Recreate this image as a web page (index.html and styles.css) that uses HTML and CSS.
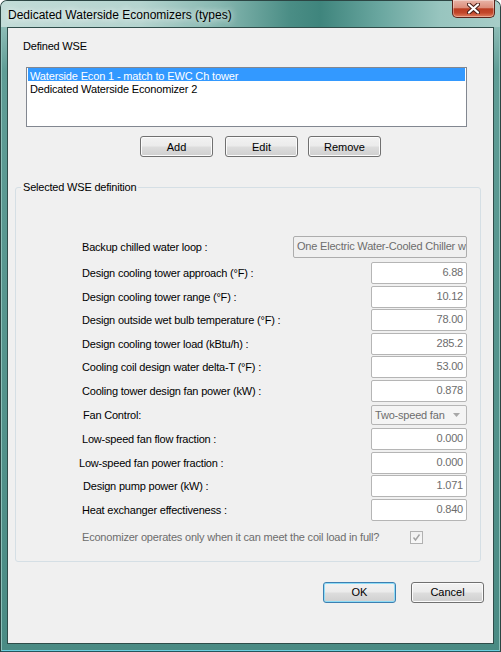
FILE: index.html
```html
<!DOCTYPE html>
<html lang="en">
<head>
    <meta charset="UTF-8">
    <title>Dedicated Waterside Economizers (types)</title>
    <link rel="stylesheet" href="styles.css">
</head>
<body>
    <div class="window">
        <div class="titlebar">
            <span class="title">Dedicated Waterside Economizers (types)</span>
            <button class="close-btn" aria-label="Close">
                <svg width="13" height="11" viewBox="0 0 13 11">
                    <path d="M2 1.5 L11 9.5 M11 1.5 L2 9.5" stroke="#4a1f17" stroke-width="4.2" stroke-linecap="round"/>
                    <path d="M2 1.5 L11 9.5 M11 1.5 L2 9.5" stroke="#ffffff" stroke-width="2.2" stroke-linecap="round"/>
                </svg>
            </button>
        </div>

        <div class="client">
            <div class="section-label">Defined WSE</div>

            <ul class="listbox">
                <li class="selected">Waterside Econ 1 - match to EWC Ch tower</li>
                <li>Dedicated Waterside Economizer 2</li>
            </ul>

            <div class="list-actions">
                <button class="btn">Add</button>
                <button class="btn btn-edit">Edit</button>
                <button class="btn btn-remove">Remove</button>
            </div>

            <fieldset class="group">
                <legend>Selected WSE definition</legend>

                <div class="form-rows">
                    <div class="field field-backup">
                        <span class="label">Backup chilled water loop :</span>
                        <div class="textbox textbox-wide">One Electric Water-Cooled Chiller w</div>
                    </div>
                    <div class="field">
                        <span class="label">Design cooling tower approach (°F) :</span>
                        <div class="textbox">6.88</div>
                    </div>
                    <div class="field">
                        <span class="label">Design cooling tower range (°F) :</span>
                        <div class="textbox">10.12</div>
                    </div>
                    <div class="field">
                        <span class="label">Design outside wet bulb temperature (°F) :</span>
                        <div class="textbox">78.00</div>
                    </div>
                    <div class="field">
                        <span class="label">Design cooling tower load (kBtu/h) :</span>
                        <div class="textbox">285.2</div>
                    </div>
                    <div class="field">
                        <span class="label">Cooling coil design water delta-T (°F) :</span>
                        <div class="textbox">53.00</div>
                    </div>
                    <div class="field">
                        <span class="label">Cooling tower design fan power (kW) :</span>
                        <div class="textbox">0.878</div>
                    </div>
                    <div class="field field-combo">
                        <span class="label label-shift">Fan Control:</span>
                        <div class="combo">
                            <span>Two-speed fan</span>
                            <svg class="combo-arrow" width="7" height="4" viewBox="0 0 7 4">
                                <path d="M0 0 H7 L3.5 4 Z" fill="#a7a7a7"/>
                            </svg>
                        </div>
                    </div>
                    <div class="field">
                        <span class="label">Low-speed fan flow fraction :</span>
                        <div class="textbox">0.000</div>
                    </div>
                    <div class="field">
                        <span class="label label-back">Low-speed fan power fraction :</span>
                        <div class="textbox">0.000</div>
                    </div>
                    <div class="field">
                        <span class="label label-shift">Design pump power (kW) :</span>
                        <div class="textbox">1.071</div>
                    </div>
                    <div class="field">
                        <span class="label">Heat exchanger effectiveness :</span>
                        <div class="textbox">0.840</div>
                    </div>
                    <div class="check-row">
                        <span class="label label-disabled">Economizer operates only when it can meet the coil load in full?</span>
                        <span class="checkbox">
                            <svg width="11" height="11" viewBox="0 0 11 11">
                                <path d="M2.5 5.5 L4.5 8 L8.5 2.5" fill="none" stroke="#a2a2a2" stroke-width="1.4"/>
                            </svg>
                        </span>
                    </div>
                </div>
            </fieldset>

            <div class="dialog-actions">
                <button class="btn btn-default">OK</button>
                <button class="btn">Cancel</button>
            </div>
        </div>
    </div>
</body>
</html>
```

FILE: styles.css
```css
* {
    margin: 0;
    padding: 0;
    box-sizing: border-box;
}

html, body {
    width: 501px;
    height: 652px;
    overflow: hidden;
}

body {
    font-family: 'Liberation Sans', Arial, sans-serif;
    font-size: 11px;
    letter-spacing: -0.2px;
    color: #000;
    background: #ffffff;
}

/* window frame */
.window {
    width: 501px;
    height: 652px;
    display: flex;
    flex-direction: column;
    border: 1px solid #2c4543;
    border-bottom-color: #24565c;
    border-radius: 7px 7px 0 0;
    background: linear-gradient(180deg, #a9cec9 0, #5f9d96 70px, #4a8b84 100%);
    box-shadow: inset 1px 0 #8dc1ba, inset -1px 0 #8dc1ba, inset 0 -1px #6cd0e0;
}

.titlebar {
    height: 26px;
    display: flex;
    align-items: flex-start;
    border-radius: 6px 6px 0 0;
    background: linear-gradient(90deg, #c3dcd8 0%, #b4d4cf 28%, #86b7b0 44%, #4a8d85 58%, #3f857d 64%, #6aa7a0 76%, #98c5bf 88%, #a7cdc8 100%);
}

.title {
    padding-left: 7px;
    line-height: 28px;
    font-size: 12px;
    letter-spacing: 0;
    color: #000;
    text-shadow: 0 0 6px rgba(255,255,255,0.9), 0 0 10px rgba(255,255,255,0.6);
}

.close-btn {
    width: 43px;
    height: 18px;
    margin: -1px 5px 0 auto;
    display: flex;
    align-items: center;
    justify-content: center;
    border: 1px solid #5a231a;
    border-top: none;
    border-radius: 0 0 5px 5px;
    background: linear-gradient(180deg, #e9b4a7 0%, #dc8e7b 45%, #bb3d22 52%, #c2462a 75%, #e07e5e 100%);
    box-shadow: inset 0 0 0 1px rgba(255,255,255,0.35);
}

.client {
    flex: 1;
    margin: 0 6px 7px;
    border: 1px solid #2f4d4a;
    background: #f0f0f0;
    padding-top: 12px;
}

.section-label {
    padding-left: 15px;
    line-height: 13px;
}

/* list of defined economizers */
.listbox {
    list-style: none;
    width: 441px;
    height: 60px;
    margin: 14px 0 0 18px;
    padding: 0 1px;
    border: 1px solid #828790;
    background: #fff;
}

.listbox li {
    height: 13px;
    padding: 3px 2px 0;
    line-height: 10px;
    letter-spacing: -0.15px;
    white-space: nowrap;
}

.listbox li.selected {
    background: #3399ff;
    color: #fff;
}

.list-actions {
    display: flex;
    margin: 9px 0 0 132px;
}

.btn {
    width: 73px;
    height: 21px;
    font-family: 'Liberation Sans', Arial, sans-serif;
    font-size: 11px;
    color: #000;
    border: 1px solid #707070;
    border-radius: 3px;
    background: linear-gradient(180deg, #f2f2f2 0%, #ebebeb 48%, #dddddd 52%, #cfcfcf 100%);
    box-shadow: inset 0 0 0 1px #fbfbfb;
}

.btn-edit { margin-left: 12px; }
.btn-remove { margin-left: 10px; }

.btn-default {
    border-color: #3c7fb1;
    box-shadow: inset 0 0 0 1px #8fdcf6;
}

/* group box */
.group {
    width: 466px;
    margin: 24px 0 0 7px;
    padding: 42px 0 17px;
    border: 1px solid #d5dfe5;
    border-radius: 3px;
}

.group legend {
    margin-left: 5px;
    padding: 0 2px;
    line-height: 13px;
}

.form-rows {
    display: flex;
    flex-direction: column;
    gap: 1.6px;
    padding: 0 13px 0 66px;
}

.field {
    height: 22px;
    display: flex;
    align-items: center;
    justify-content: space-between;
}

.field-backup { margin-bottom: 2.4px; }
.field-combo { margin-bottom: 1px; }

.label {
    white-space: nowrap;
}

.label-shift { margin-left: 1px; }
.label-back { margin-left: -3px; }

.label-disabled {
    color: #6d6d6d;
}

.textbox {
    width: 96px;
    height: 22px;
    padding: 0 3px;
    line-height: 19px;
    text-align: right;
    color: #6d6d6d;
    background: #fff;
    border: 1px solid #b5b5b5;
    border-radius: 2px;
    white-space: nowrap;
    overflow: hidden;
}

.textbox-wide {
    width: 174px;
    text-align: left;
    background: #f0f0f0;
    border-color: #adadad;
}

.combo {
    width: 96px;
    height: 20px;
    display: flex;
    align-items: center;
    justify-content: space-between;
    padding: 0 6px 0 3px;
    color: #6d6d6d;
    background: #f4f4f4;
    border: 1px solid #b5b5b5;
    border-radius: 2px;
}

.check-row {
    display: flex;
    align-items: center;
    height: 13px;
    margin-top: 8.4px;
}

.check-row .label {
    width: 328px;
}

.checkbox {
    width: 13px;
    height: 13px;
    display: flex;
    align-items: center;
    justify-content: center;
    border: 1px solid #b1b1b1;
    background: linear-gradient(180deg, #f0f0f0, #f8f8f8);
}

.dialog-actions {
    display: flex;
    justify-content: flex-end;
    gap: 15px;
    margin-top: 20px;
    padding-right: 9px;
}
```
